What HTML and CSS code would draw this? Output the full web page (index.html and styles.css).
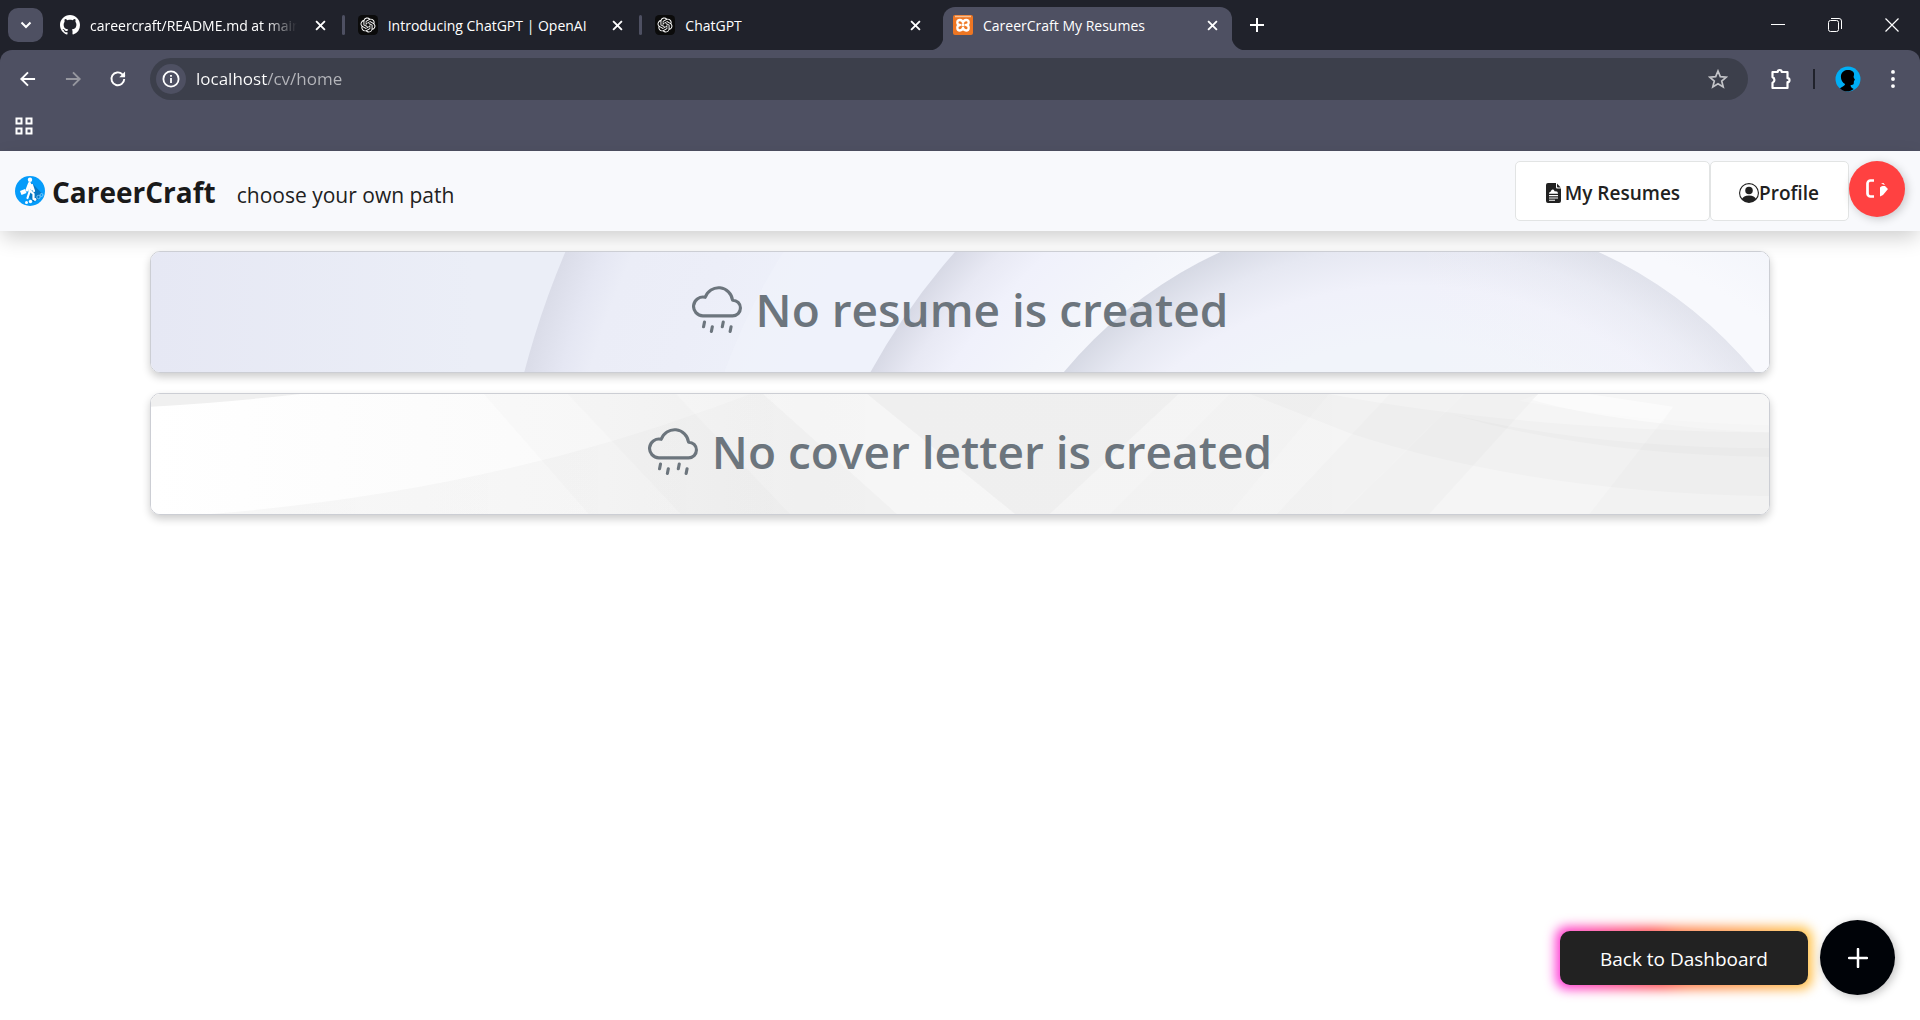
FILE: index.html
```html
<!DOCTYPE html>
<html lang="en">
<head>
<meta charset="utf-8">
<title>CareerCraft My Resumes</title>
<meta name="viewport" content="width=device-width, initial-scale=1">
<link rel="stylesheet" href="styles.css">
</head>
<body>
<svg class="defs" width="0" height="0" aria-hidden="true">
  <defs>
    <symbol id="i-close" viewBox="0 0 10 10"><path d="M1 1l8 8M9 1L1 9" fill="none" stroke="currentColor" stroke-width="1.7"/></symbol>
    <symbol id="i-openai" viewBox="0 0 24 24"><rect width="24" height="24" rx="5" fill="#0b0b0b"/><path transform="translate(3 3) scale(.75)" fill="#fff" d="M22.2819 9.8211a5.9847 5.9847 0 0 0-.5157-4.9108 6.0462 6.0462 0 0 0-6.5098-2.9A6.0651 6.0651 0 0 0 4.9807 4.1818a5.9847 5.9847 0 0 0-3.9977 2.9 6.0462 6.0462 0 0 0 .7427 7.0966 5.98 5.98 0 0 0 .511 4.9107 6.051 6.051 0 0 0 6.5146 2.9001A5.9847 5.9847 0 0 0 13.2599 24a6.0557 6.0557 0 0 0 5.7718-4.2058 5.9894 5.9894 0 0 0 3.9977-2.9001 6.0557 6.0557 0 0 0-.7475-7.0729zm-9.022 12.6081a4.4755 4.4755 0 0 1-2.8764-1.0408l.1419-.0804 4.7783-2.7582a.7948.7948 0 0 0 .3927-.6813v-6.7369l2.02 1.1686a.071.071 0 0 1 .038.052v5.5826a4.504 4.504 0 0 1-4.4945 4.4944zm-9.6607-4.1254a4.4708 4.4708 0 0 1-.5346-3.0137l.142.0852 4.783 2.7582a.7712.7712 0 0 0 .7806 0l5.8428-3.3685v2.3324a.0804.0804 0 0 1-.0332.0615L9.74 19.9502a4.4992 4.4992 0 0 1-6.1408-1.6464zM2.3408 7.8956a4.485 4.485 0 0 1 2.3655-1.9728V11.6a.7664.7664 0 0 0 .3879.6765l5.8144 3.3543-2.0201 1.1685a.0757.0757 0 0 1-.071 0l-4.8303-2.7865A4.504 4.504 0 0 1 2.3408 7.872zm16.5963 3.8558L13.1038 8.364 15.1192 7.2a.0757.0757 0 0 1 .071 0l4.8303 2.7913a4.4944 4.4944 0 0 1-.6765 8.1042v-5.6772a.79.79 0 0 0-.407-.667zm2.0107-3.0231l-.142-.0852-4.7735-2.7818a.7759.7759 0 0 0-.7854 0L9.409 9.2297V6.8974a.0662.0662 0 0 1 .0284-.0615l4.8303-2.7866a4.4992 4.4992 0 0 1 6.6802 4.66zM8.3065 12.863l-2.02-1.1638a.0804.0804 0 0 1-.038-.0567V6.0742a4.4992 4.4992 0 0 1 7.3757-3.4537l-.142.0805L8.704 5.459a.7948.7948 0 0 0-.3927.6813zm1.0976-2.3654l2.602-1.4998 2.6069 1.4998v2.9994l-2.5974 1.4997-2.6067-1.4997Z"/></symbol>
    <symbol id="i-drizzle" viewBox="0 0 16 16"><g fill="none" stroke="currentColor" stroke-linecap="round"><path d="M13 5.500a2.500 2.500 0 0 1 0 5H3.500a3 3 0 1 1 .73-5.910A4.500 4.500 0 0 1 12.970 5.500z" stroke-linejoin="round"/><path d="M4 12.500l-.3 1.500M10 12.500l-.3 1.500M6.500 14l-.3 1.500M12.500 14l-.3 1.500"/></g></symbol>
  </defs>
</svg>

<header class="browser">
  <div class="tabstrip">
    <button class="tab-search" aria-label="Search tabs"><svg width="12" height="8" viewBox="0 0 12 8"><path d="M1.500 1.500L6 6l4.500-4.500" fill="none" stroke="currentColor" stroke-width="2"/></svg></button>
    <div class="tabs">
      <div class="tab">
        <svg class="favicon" viewBox="0 0 16 16"><path fill="#fff" d="M8 0C3.580 0 0 3.580 0 8c0 3.540 2.290 6.530 5.470 7.590.4.070.550-.170.550-.380 0-.190-.010-.820-.010-1.490-2.010.370-2.530-.490-2.690-.940-.090-.230-.480-.940-.820-1.130-.280-.150-.680-.520-.010-.530.630-.010 1.080.580 1.230.820.720 1.210 1.870.870 2.330.660.070-.520.280-.870.510-1.070-1.780-.2-3.640-.890-3.640-3.950 0-.870.310-1.590.820-2.150-.080-.2-.360-1.020.080-2.120 0 0 .670-.210 2.200.820.640-.180 1.320-.270 2-.270s1.360.090 2 .270c1.530-1.040 2.200-.820 2.200-.820.440 1.100.160 1.920.080 2.120.510.560.820 1.270.820 2.150 0 3.070-1.870 3.750-3.650 3.950.290.250.540.730.540 1.480 0 1.070-.010 1.930-.010 2.200 0 .210.150.460.550.380A8.010 8.010 0 0 0 16 8c0-4.420-3.580-8-8-8"/></svg>
        <button class="tab-title fade">careercraft/README.md at main</button>
        <button class="tab-close" aria-label="Close tab"><svg><use href="#i-close"/></svg></button>
      </div>
      <div class="tab">
        <svg class="favicon"><use href="#i-openai"/></svg>
        <button class="tab-title">Introducing ChatGPT | OpenAI</button>
        <button class="tab-close" aria-label="Close tab"><svg><use href="#i-close"/></svg></button>
      </div>
      <div class="tab last">
        <svg class="favicon"><use href="#i-openai"/></svg>
        <button class="tab-title">ChatGPT</button>
        <button class="tab-close" aria-label="Close tab"><svg><use href="#i-close"/></svg></button>
      </div>
      <div class="tab active">
        <svg class="favicon" viewBox="0 0 20 20"><rect width="20" height="20" rx="2" fill="#ee7623"/><path d="M2 1.500h16" stroke="#f7c094" stroke-width="1.500"/><path d="M10 7.600C9.600 5.800 8.300 5 6.900 5 5.300 5 4.300 6 4.300 7.500S5.300 10 7 10c-1.700 0-2.700 1-2.700 2.700S5.300 15.500 6.900 15.500c1.600 0 2.700-1 3.100-2.700.4 1.700 1.500 2.700 3.100 2.700 1.600 0 2.600-1.100 2.600-2.800S14.700 10 13 10c1.700 0 2.700-1 2.700-2.500S14.700 5 13.100 5c-1.400 0-2.700.8-3.100 2.600zM8.500 10h3" fill="none" stroke="#fff" stroke-width="2.300" stroke-linejoin="round"/></svg>
        <button class="tab-title">CareerCraft My Resumes</button>
        <button class="tab-close" aria-label="Close tab"><svg><use href="#i-close"/></svg></button>
      </div>
    </div>
    <button class="new-tab" aria-label="New tab"><svg width="14" height="14" viewBox="0 0 14 14"><path d="M7 0v14M0 7h14" stroke="currentColor" stroke-width="2"/></svg></button>
    <div class="window-controls">
      <button aria-label="Minimize"><svg width="14" height="14" viewBox="0 0 14 14"><path d="M0 6.500h14" stroke="currentColor"/></svg></button>
      <button aria-label="Restore"><svg width="14" height="14" viewBox="0 0 14 14"><g fill="none" stroke="currentColor"><rect x=".5" y="2.500" width="10" height="11" rx="2"/><path d="M3 .5h8a2.500 2.500 0 0 1 2.500 2.500v8"/></g></svg></button>
      <button aria-label="Close"><svg width="14" height="14" viewBox="0 0 14 14"><path d="M.5.5l13 13M13.500.5l-13 13" stroke="currentColor" stroke-width="1.200"/></svg></button>
    </div>
  </div>

  <div class="toolbar">
    <div class="nav-row">
      <button class="tool" aria-label="Back"><svg viewBox="0 0 24 24"><path d="M20.500 12H4.500M12 4l-8 8 8 8" fill="none" stroke="currentColor" stroke-width="2.300"/></svg></button>
      <button class="tool dim" aria-label="Forward"><svg viewBox="0 0 24 24"><path d="M3.500 12h16M12 4l8 8-8 8" fill="none" stroke="currentColor" stroke-width="2.300"/></svg></button>
      <button class="tool" aria-label="Reload"><svg viewBox="0 0 24 24"><path d="M19.500 12a7.700 7.700 0 1 1-2.200-5.600L20 9" fill="none" stroke="currentColor" stroke-width="2.300"/><path d="M20.500 3v7h-7z" fill="currentColor"/></svg></button>
      <form class="address">
        <button type="button" class="site-info" aria-label="Site information"><svg width="18" height="18" viewBox="0 0 18 18"><circle cx="9" cy="9" r="7.600" fill="none" stroke="currentColor" stroke-width="1.800"/><path d="M9 8v5M9 5v1.800" stroke="currentColor" stroke-width="1.800"/></svg></button>
        <input class="url" type="text" aria-label="Address" value="localhost/cv/home">
        <button type="button" class="star" aria-label="Bookmark this tab"><svg width="20" height="20" viewBox="0 0 20 20"><path d="M10 2l2.300 5.600 6 .5-4.600 3.900 1.500 5.900L10 14.700 4.800 17.900 6.300 12 1.700 8.100l6-.5z" fill="none" stroke="currentColor" stroke-width="1.700"/></svg></button>
      </form>
      <div class="extras">
        <button class="tool puzzle" aria-label="Extensions"><svg viewBox="0 0 24 24"><path d="M3.500 5h5.200a2 2 0 0 1 4 0h5.800v6.200a2 2 0 0 1 0 4v5.800H3.500v-5.300a3 3 0 0 0 0-5.600z" fill="none" stroke="currentColor" stroke-width="2.200" stroke-linejoin="round"/></svg></button>
        <span class="bar"></span>
        <button class="tool profile" aria-label="Profile"><svg viewBox="0 0 26 26"><circle cx="13" cy="13" r="12.500" fill="#00aff5"/><path d="M5 22.500c2-2 5-2.500 5-4.500-3-1.500-4.500-5-4-8.500C6.500 6 9.500 4 13 4c4 0 6.500 2 6 5l-.5 2 1.500 3-1 .7-.3 3c-.3 1.300-2 1-3 1.300-.2 2 1 3 3 4-4 3.200-9.500 3.200-13.700-.5z" fill="#000"/></svg></button>
        <button class="tool" aria-label="Menu"><svg viewBox="0 0 24 24" fill="currentColor"><circle cx="12" cy="3.500" r="2.300"/><circle cx="12" cy="12" r="2.300"/><circle cx="12" cy="20.500" r="2.300"/></svg></button>
      </div>
    </div>
    <div class="bookmarks">
      <button class="apps" aria-label="Apps"><svg width="18" height="18" viewBox="0 0 18 18" fill="none" stroke="currentColor" stroke-width="2"><path d="M1.500 1.500H6.500V6.500H1.500zM11.500 1.500H16.500V6.500H11.500zM1.500 11.500H6.500V16.500H1.500zM11.500 11.500H16.500V16.500H11.500z"/></svg></button>
    </div>
  </div>
</header>

<div class="page">
  <nav class="navbar">
    <a class="brand" href="#">
      <svg class="logo" viewBox="0 0 30 30"><circle cx="15" cy="15" r="15" fill="#069cfa"/><path d="M17 7l9.500 10a12 12 0 0 1-8 9L13 20z" fill="#0877c4"/><g fill="none" stroke="#fff" stroke-linecap="round" stroke-linejoin="round"><path d="M14.500 7.500L12 14M14.500 8l2.500 5" stroke-width="3"/><path d="M14.500 8v8l-2 6M15.500 15l3 3v5M17 9l2 6" stroke-width="2.200"/></g><circle cx="15" cy="3.700" r="2.200" fill="#fff"/><path d="M5 15l5-2 1.500 4-5 2z" fill="#fff"/><g fill="#fff"><circle cx="11.500" cy="26.500" r="1.500"/><circle cx="15.500" cy="25.500" r="1.700"/><circle cx="20" cy="23.500" r="1.400"/></g><g fill="none" stroke="#9bd8ff" stroke-width=".7"><circle cx="23.500" cy="21" r="1.700"/><circle cx="26.500" cy="19" r="1.500"/></g></svg>
      <strong>CareerCraft</strong>
    </a>
    <span class="tagline">choose your own path</span>
    <div class="actions">
      <a class="nav-link resumes" href="#"><svg class="file" viewBox="0 0 15 20"><path fill="currentColor" fill-rule="evenodd" d="M2 0h8v4c0 1 .5 1.500 1.500 1.500H15V18a2 2 0 0 1-2 2H2a2 2 0 0 1-2-2V2a2 2 0 0 1 2-2zM3 12v1.200h9V12zM3 14.500v1h9v-1zM3 16.800v1h6v-1zM3 10.700h9c0-2-1.500-2.800-3-2.300C8 7.600 8 6 6.500 6.500S5 8.500 4.300 9C3.300 9 3 10 3 10.700z"/><path fill="currentColor" d="M11 .5L14.700 4.500H12A1 1 0 0 1 11 3.500z"/></svg>My Resumes</a>
      <a class="nav-link" href="#"><svg viewBox="0 0 16 16" fill="currentColor"><path d="M11 6a3 3 0 1 1-6 0 3 3 0 0 1 6 0"/><path fill-rule="evenodd" d="M0 8a8 8 0 1 1 16 0A8 8 0 0 1 0 8m8-7a7 7 0 0 0-5.468 11.370C3.242 11.226 4.805 10 8 10s4.757 1.225 5.468 2.370A7 7 0 0 0 8 1"/></svg>Profile</a>
      <button class="logout" aria-label="Log out"><svg width="22" height="20" viewBox="0 0 22 20"><path d="M8 1.500H4.500a3 3 0 0 0-3 3v10a3 3 0 0 0 3 3H8" fill="none" stroke="#fff" stroke-width="2.700"/><path d="M14 8.500c1.500-1.500 3-1.800 5-1.500l3 3-5 6-3 1.500zM15 4.500l2.500-.5 1.500 2-1-.3z" fill="#fff"/></svg></button>
    </div>
  </nav>

  <main class="cards">
    <section class="card">
      <svg class="art" viewBox="0 0 1620 122" preserveAspectRatio="none" aria-hidden="true">
        <defs>
          <linearGradient id="base"><stop offset="0" stop-color="#e6e8f4"/><stop offset=".2" stop-color="#ebeef7"/><stop offset=".26" stop-color="#ebeef7"/><stop offset=".9" stop-color="#f9f9fd"/></linearGradient>
          <radialGradient id="ra" gradientUnits="userSpaceOnUse" cx="1247" cy="348" r="902"><stop offset=".72" stop-color="#eef1fa"/><stop offset=".84" stop-color="#eceef8"/><stop offset=".93" stop-color="#ebedf7"/><stop offset=".96" stop-color="#e5e7f3"/><stop offset="1" stop-color="#dadce8"/></radialGradient>
          <radialGradient id="rb" gradientUnits="userSpaceOnUse" cx="1320" cy="447" r="682"><stop offset=".7" stop-color="#f8f9fd"/><stop offset=".8" stop-color="#f3f5fb"/><stop offset=".9" stop-color="#f0f1fb"/><stop offset=".95" stop-color="#e8e9f4"/><stop offset="1" stop-color="#d7d9e5"/></radialGradient>
          <radialGradient id="rc" gradientUnits="userSpaceOnUse" cx="1260" cy="405" r="447"><stop offset=".7" stop-color="#f1f4fa"/><stop offset=".83" stop-color="#f0f1fa"/><stop offset=".92" stop-color="#e6e8f2"/><stop offset="1" stop-color="#d6d9e4"/></radialGradient>
          <linearGradient id="rcl"><stop offset=".5" stop-color="#f5f5fb" stop-opacity="0"/><stop offset="1" stop-color="#f5f5fb" stop-opacity=".6"/></linearGradient>
        </defs>
        <rect width="1620" height="122" fill="url(#base)"/>
        <circle cx="1247" cy="348" r="902" fill="url(#ra)"/>
        <path d="M633 0Q596 60 574 122H724L805 0z" fill="#eff2fb" opacity=".7"/>
        <circle cx="1320" cy="447" r="682" fill="url(#rb)"/>
        <circle cx="1260" cy="405" r="447" fill="url(#rc)"/>
        <circle cx="1260" cy="405" r="447" fill="url(#rcl)"/>
      </svg>
      <h1><svg><use href="#i-drizzle"/></svg> No resume is created</h1>
    </section>

    <section class="card">
      <svg class="art" viewBox="0 0 1620 122" preserveAspectRatio="none" aria-hidden="true">
        <defs>
          <linearGradient id="grey"><stop offset="0" stop-color="#fff"/><stop offset=".28" stop-color="#fafafa"/><stop offset=".4" stop-color="#f5f5f5"/><stop offset="1" stop-color="#f5f5f5"/></linearGradient>
          <linearGradient id="sweep"><stop offset="0" stop-opacity=".03"/><stop offset=".22" stop-opacity=".02"/><stop offset=".45" stop-opacity=".004"/><stop offset="1" stop-opacity="0"/></linearGradient>
        </defs>
        <rect width="1620" height="122" fill="url(#grey)"/>
        <path d="M0 0H150Q70 9 0 13z" fill="#f0f0f0"/>
        <path d="M60 122Q330 100 560 15L600 0H1620V122z" fill="url(#sweep)"/>
        <path d="M333 0H613L747 122H438z" fill="#000" opacity=".013"/>
        <path d="M417 0H526L640 122H530z" fill="#000" opacity=".01"/>
        <path d="M613 0H717L865 122H747z" fill="#fff" opacity=".2"/>
        <path d="M717 0H1029L900 122H865z" fill="#000" opacity=".018"/>
        <path d="M1080 0H1180L1080 122H960z" fill="#000" opacity=".008"/>
        <path d="M1240 0H1314L1192 122H1127z" fill="#000" opacity=".01"/>
        <path d="M1314 0H1389L1280 122H1192z" fill="#000" opacity=".015"/>
        <path d="M1389 0H1620V32Q1480 28 1370 7z" fill="#fff" opacity=".2"/>
        <path d="M1389 0H1440L1524 13L1513 30Q1430 20 1383 6z" fill="#fff" opacity=".5"/>
        <path d="M1180 0Q1370 36 1620 39V104Q1380 100 1200 40L1100 0z" fill="#000" opacity=".015"/>
        <path d="M1300 20Q1440 54 1620 55V64Q1440 62 1300 20z" fill="#000" opacity=".016"/>
        <path d="M1524 13L1440 122H1620V39Q1560 37 1513 30z" fill="#000" opacity=".012"/>
      </svg>
      <h1><svg><use href="#i-drizzle"/></svg> No cover letter is created</h1>
    </section>
  </main>

  <div class="floating">
    <button class="back">Back to Dashboard</button>
    <button class="add" aria-label="Create new"><svg width="20" height="20" viewBox="0 0 20 20"><path d="M10 1v18M1 10h18" stroke="#fff" stroke-width="2.500" stroke-linecap="round"/></svg></button>
  </div>
</div>
</body>
</html>
```
FILE: styles.css
```css
* { box-sizing: border-box; }
body {
  margin: 0;
  min-height: 100vh;
  display: flex;
  flex-direction: column;
  background: #fff;
  color: #212529;
  font-family: "Open Sans", "Noto Sans", sans-serif;
}
button {
  margin: 0;
  padding: 0;
  border: 0;
  background: none;
  color: inherit;
  font: inherit;
  display: flex;
  align-items: center;
  justify-content: center;
}
a { color: inherit; text-decoration: none; }
svg { display: block; flex: none; }
.defs { position: absolute; }

/* Browser chrome */
.browser { background: #20222b; color: #fff; }
.tabstrip { display: flex; height: 50px; padding-left: 8px; }
.tab-search {
  width: 35px;
  height: 34px;
  margin: 8px 7px 0 0;
  border-radius: 10px;
  background: #4e5062;
}
.tabs { display: flex; flex: 0 1 1182px; min-width: 0; padding-top: 7px; }
.tab {
  position: relative;
  display: flex;
  align-items: center;
  flex: 1 1 0;
  min-width: 0;
  height: 36px;
  margin-right: 4px;
  padding: 0 18px 0 10px;
}
.tab::after {
  content: "";
  position: absolute;
  right: -1px;
  top: 8px;
  width: 3px;
  height: 20px;
  border-radius: 2px;
  background: #4e5062;
}
.tab.last::after { display: none; }
.tab.active {
  flex: 0 1 289px;
  height: 43px;
  margin-right: 0;
  padding: 0 14px 7px 10px;
  border-radius: 12px 12px 0 0;
  background: #4e5062;
}
.tab.active::before, .tab.active::after {
  content: "";
  position: absolute;
  top: auto;
  bottom: 0;
  width: 14px;
  height: 14px;
  border-radius: 0;
}
.tab.active::before { left: -14px; background: radial-gradient(circle at 0 0, #20222b 14px, #4e5062 15px); }
.tab.active::after { right: -14px; background: radial-gradient(circle at 100% 0, #20222b 14px, #4e5062 15px); }
.favicon { width: 20px; height: 20px; }
.tab-title {
  flex: 1;
  min-width: 0;
  justify-content: flex-start;
  margin: 0 18px 0 10px;
  padding-top: 2px;
  overflow: hidden;
  white-space: nowrap;
  font-size: 14px;
  line-height: 20px;
}
.fade { mask-image: linear-gradient(to right, #000 85%, transparent); }
.tab-close svg { width: 11px; height: 11px; }
.new-tab { width: 50px; }
.window-controls { display: flex; margin-left: auto; }
.window-controls button { width: 57px; }

.toolbar { background: #4e5062; border-radius: 12px 12px 0 0; padding-top: 8px; }
.nav-row { display: flex; align-items: center; padding-left: 5px; }
.tool { width: 45px; height: 42px; }
.tool svg { width: 20px; height: 20px; }
.dim { color: #96979f; }
.address {
  display: flex;
  align-items: center;
  flex: 1;
  height: 42px;
  margin: 0 10px;
  padding: 0 20px 0 6px;
  border-radius: 21px;
  background: #3c3f4b;
}
.site-info { width: 30px; height: 30px; border-radius: 50%; background: #4e5062; }
.url {
  flex: 1;
  min-width: 0;
  height: 30px;
  margin: 0 10px;
  padding: 0;
  border: 0;
  outline: 0;
  color: transparent;
  background: linear-gradient(to right, #fff 71px, #b5b6bb 71px) text;
  font: 17px/30px "Open Sans", "Noto Sans", sans-serif;
}
.star { color: #c3c4c8; }
.extras { display: flex; align-items: center; padding-right: 5px; }
.extras .bar { width: 2px; height: 20px; margin: 0 10px; background: #20222b; }
.extras .puzzle svg { width: 24px; height: 24px; }
.extras .profile svg { width: 26px; height: 26px; }
.bookmarks { padding: 17px 15px 16px; }

/* Page header */
.navbar {
  display: flex;
  height: 80px;
  padding: 10px 15px;
  background: #f8f9fc;
  box-shadow: 0 8px 20px -2px rgba(0, 0, 0, .2);
  color: #212121;
}
.brand { display: flex; align-items: center; gap: 7px; font-size: 28px; line-height: 60px; }
.brand .logo { width: 30px; height: 30px; }
.brand strong { padding-top: 2px; font-weight: 700; color: #1a1a1a; }
.tagline { margin-left: 21px; padding-top: 2px; font-size: 21px; line-height: 64px; }
.actions { display: flex; align-items: flex-start; margin-left: auto; }
.nav-link {
  display: flex;
  align-items: center;
  height: 60px;
  padding: 3px 29px 0 28px;
  border: 1px solid #e2e4e4;
  border-radius: 5px;
  background: #fff;
  font-size: 19px;
  line-height: 28px;
  font-weight: 600;
}
.nav-link svg { width: 20px; height: 20px; }
.nav-link .file { width: 15px; margin-right: 4px; }
.resumes { padding: 3px 29px 0 30px; }
.logout {
  width: 56px;
  height: 56px;
  border-radius: 50%;
  background: #ff4141;
  box-shadow: 2px 2px 10px rgba(0, 0, 0, .2);
}

/* Cards */
.cards { display: flex; flex-direction: column; gap: 20px; padding: 20px 150px; }
.card {
  position: relative;
  height: 122px;
  overflow: hidden;
  border-radius: 10px;
  border: 1px solid #ccced4;
  box-shadow: 0 4px 8px rgba(0, 0, 0, .2);
}
.art { position: absolute; inset: 0; width: 100%; height: 100%; }
.card h1 {
  position: relative;
  display: flex;
  justify-content: center;
  gap: 14px;
  margin: 0;
  padding-top: 21px;
  color: #6c757d;
  font-size: 46px;
  line-height: 72px;
  font-weight: 600;
}
.card h1 svg { width: 50px; height: 50px; margin-top: 10px; }

/* Floating actions */
.floating {
  position: fixed;
  right: 25px;
  bottom: 25px;
  display: flex;
  align-items: center;
  gap: 12px;
}
.back {
  position: relative;
  height: 54px;
  padding: 2px 40px 0;
  border-radius: 10px;
  background: #222;
  color: #fff;
  font-size: 19px;
  line-height: 28px;
}
.back::before {
  content: "";
  position: absolute;
  inset: -4px;
  z-index: -1;
  border-radius: 10px;
  background: linear-gradient(80deg, #ff2fe0, #ff4a4a 40%, #ff7a45 50%, #ffc23d);
  filter: blur(6px);
}
.add {
  width: 75px;
  height: 75px;
  border-radius: 50%;
  background: #000308;
  box-shadow: 2px 2px 10px rgba(0, 0, 0, .25);
}
```
